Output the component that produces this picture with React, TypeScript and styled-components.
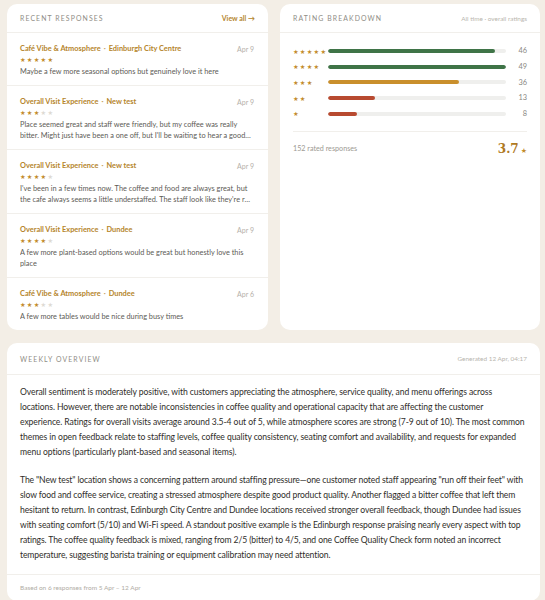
import styled, { createGlobalStyle } from "styled-components";

const GlobalStyle = createGlobalStyle`
  * { box-sizing: border-box; }
  html, body {
    margin: 0;
    padding: 0;
    background: #f3eee6;
  }
  body {
    font-family: Lato, "Noto Sans", sans-serif;
    color: #2f2e2a;
  }
`;

const Page = styled.div`
  width: 545px;
  padding: 4px 5px 3px 7px;
  display: flex;
  flex-direction: column;
  gap: 13px;
`;

const TopRow = styled.div`
  display: grid;
  grid-template-columns: 261px 260px;
  gap: 12px;
`;

const Card = styled.section`
  background: #fff;
  border-radius: 10px;
  display: flex;
  flex-direction: column;
  overflow: hidden;
`;

const CardHeader = styled.header<{ $tall?: boolean }>`
  height: ${(p) => (p.$tall ? 32 : 29)}px;
  padding: 0 13px;
  display: flex;
  align-items: center;
  justify-content: space-between;
  border-bottom: 1px solid #f1efeb;
`;

const Label = styled.h2`
  margin: 0;
  font-size: 6.9px;
  font-weight: 400;
  letter-spacing: 1.1px;
  text-transform: uppercase;
  color: #8f8d86;
`;

const HeaderLink = styled.a`
  font-size: 7px;
  font-weight: 700;
  color: #b5852c;
  text-decoration: none;
`;

const HeaderNote = styled.span`
  font-size: 6.4px;
  color: #b8b5ae;
`;

const Item = styled.article`
  padding: 10px 14px 8px 13px;
  border-bottom: 1px solid #f1efeb;
  &:last-child {
    border-bottom: none;
  }
`;

const ItemTop = styled.div`
  height: 11px;
  display: flex;
  align-items: center;
  justify-content: space-between;
`;

const ItemTitle = styled.div`
  font-size: 7.4px;
  font-weight: 700;
  color: #b5852c;
`;

const Dot = styled.span`
  margin: 0 3px;
  color: #c9a467;
`;

const DateText = styled.span`
  font-size: 7px;
  color: #b5b1aa;
`;

const StarRow = styled.div<{ $size?: number }>`
  display: flex;
  gap: 1.2px;
  height: 9px;
  align-items: center;
  margin-top: 2px;
  font-family: "DejaVu Sans", sans-serif;
  font-size: ${(p) => p.$size ?? 6.3}px;
  line-height: 1;
`;

const Star = styled.span<{ $on: boolean }>`
  color: ${(p) => (p.$on ? "#c28b2c" : "#dedad3")};
`;

const ItemText = styled.p`
  margin: 1px 0 0;
  font-size: 7.35px;
  line-height: 11px;
  color: #5d5b56;
  display: -webkit-box;
  -webkit-line-clamp: 2;
  -webkit-box-orient: vertical;
  overflow: hidden;
`;

const Breakdown = styled.div`
  padding: 10px 13px 0;
  display: flex;
  flex-direction: column;
`;

const RatingRow = styled.div`
  height: 15.7px;
  display: grid;
  grid-template-columns: 35px 1fr 21px;
  align-items: center;
`;

const Track = styled.div`
  height: 4px;
  border-radius: 2px;
  background: #efefed;
  overflow: hidden;
`;

const Fill = styled.div<{ $color: string }>`
  height: 100%;
  border-radius: 2px;
  background: ${(p) => p.$color};
`;

const Count = styled.span`
  text-align: right;
  font-size: 7.4px;
  color: #8a8882;
`;

const Divider = styled.hr`
  margin: 9.5px 13px 0;
  border: none;
  border-top: 1px solid #f1efeb;
`;

const Summary = styled.div`
  padding: 10px 13px;
  display: flex;
  align-items: center;
  justify-content: space-between;
`;

const SummaryText = styled.span`
  font-size: 7.2px;
  color: #9d9a93;
`;

const Average = styled.span`
  font-family: "DejaVu Serif", "Liberation Serif", serif;
  font-size: 12px;
  font-weight: 700;
  color: #b07a1f;
  display: flex;
  align-items: baseline;
  gap: 2px;
`;

const AverageStar = styled.span`
  font-family: "DejaVu Sans", sans-serif;
  font-size: 7px;
  color: #c28b2c;
`;

const Overview = styled.div`
  padding: 10px 13px 11px;
  display: flex;
  flex-direction: column;
  gap: 13px;
`;

const Paragraph = styled.p<{ $tracking: number }>`
  margin: 0;
  font-size: 8.6px;
  letter-spacing: ${(p) => p.$tracking}px;
  line-height: 15px;
  color: #2f2e2a;
`;

const Footer = styled.footer`
  padding: 9px 13px 10px;
  border-top: 1px solid #f1efeb;
  font-size: 6.5px;
  color: #b0aca5;
`;

interface IReview {
  survey: string;
  location: string;
  date: string;
  stars: number;
  text: string;
}

const reviews: IReview[] = [
  {
    survey: "Café Vibe & Atmosphere",
    location: "Edinburgh City Centre",
    date: "Apr 9",
    stars: 5,
    text: "Maybe a few more seasonal options but genuinely love it here",
  },
  {
    survey: "Overall Visit Experience",
    location: "New test",
    date: "Apr 9",
    stars: 3,
    text: "Place seemed great and staff were friendly, but my coffee was really bitter. Might just have been a one off, but I'll be waiting to hear a good word from friends before I come back.",
  },
  {
    survey: "Overall Visit Experience",
    location: "New test",
    date: "Apr 9",
    stars: 4,
    text: "I've been in a few times now. The coffee and food are always great, but the cafe always seems a little understaffed. The staff look like they're run off their feet most days.",
  },
  {
    survey: "Overall Visit Experience",
    location: "Dundee",
    date: "Apr 9",
    stars: 4,
    text: "A few more plant-based options would be great but honestly love this place",
  },
  {
    survey: "Café Vibe & Atmosphere",
    location: "Dundee",
    date: "Apr 6",
    stars: 3,
    text: "A few more tables would be nice during busy times",
  },
];

const ratings = [
  { stars: 5, count: 46, color: "#3f7447" },
  { stars: 4, count: 49, color: "#3f7447" },
  { stars: 3, count: 36, color: "#c98f2c" },
  { stars: 2, count: 13, color: "#b84a30" },
  { stars: 1, count: 8, color: "#b84a30" },
];

// tracking per paragraph keeps the line breaks of the original with the substitute font
const overview = [
  {
    tracking: -0.09,
    text: "Overall sentiment is moderately positive, with customers appreciating the atmosphere, service quality, and menu offerings across locations. However, there are notable inconsistencies in coffee quality and operational capacity that are affecting the customer experience. Ratings for overall visits average around 3.5-4 out of 5, while atmosphere scores are strong (7-9 out of 10). The most common themes in open feedback relate to staffing levels, coffee quality consistency, seating comfort and availability, and requests for expanded menu options (particularly plant-based and seasonal items).",
  },
  {
    tracking: -0.12,
    text: 'The "New test" location shows a concerning pattern around staffing pressure—one customer noted staff appearing "run off their feet" with slow food and coffee service, creating a stressed atmosphere despite good product quality. Another flagged a bitter coffee that left them hesitant to return. In contrast, Edinburgh City Centre and Dundee locations received stronger overall feedback, though Dundee had issues with seating comfort (5/10) and Wi-Fi speed. A standout positive example is the Edinburgh response praising nearly every aspect with top ratings. The coffee quality feedback is mixed, ranging from 2/5 (bitter) to 4/5, and one Coffee Quality Check form noted an incorrect temperature, suggesting barista training or equipment calibration may need attention.',
  },
];

const Stars = ({ value, total = 5, size }: { value: number; total?: number; size?: number }) => (
  <StarRow $size={size}>
    {Array.from({ length: total }, (_, i) => (
      <Star key={i} $on={i < value}>
        ★
      </Star>
    ))}
  </StarRow>
);

const App = () => {
  const max = Math.max(...ratings.map((r) => r.count));
  return (
    <>
      <GlobalStyle />
      <Page>
        <TopRow>
          <Card>
            <CardHeader>
              <Label>Recent responses</Label>
              <HeaderLink href="#">View all →</HeaderLink>
            </CardHeader>
            {reviews.map((r, i) => (
              <Item key={i}>
                <ItemTop>
                  <ItemTitle>
                    {r.survey}
                    <Dot>·</Dot>
                    {r.location}
                  </ItemTitle>
                  <DateText>{r.date}</DateText>
                </ItemTop>
                <Stars value={r.stars} />
                <ItemText>{r.text}</ItemText>
              </Item>
            ))}
          </Card>
          <Card>
            <CardHeader>
              <Label>Rating breakdown</Label>
              <HeaderNote>All time · overall ratings</HeaderNote>
            </CardHeader>
            <Breakdown>
              {ratings.map((r) => (
                <RatingRow key={r.stars}>
                  <Stars value={r.stars} total={r.stars} />
                  <Track>
                    <Fill $color={r.color} style={{ width: `${(r.count / max) * 100}%` }} />
                  </Track>
                  <Count>{r.count}</Count>
                </RatingRow>
              ))}
            </Breakdown>
            <Divider />
            <Summary>
              <SummaryText>152 rated responses</SummaryText>
              <Average>
                3.7<AverageStar>★</AverageStar>
              </Average>
            </Summary>
          </Card>
        </TopRow>
        <Card>
          <CardHeader $tall>
            <Label>Weekly overview</Label>
            <HeaderNote>Generated 12 Apr, 04:17</HeaderNote>
          </CardHeader>
          <Overview>
            {overview.map((p, i) => (
              <Paragraph key={i} $tracking={p.tracking}>
                {p.text}
              </Paragraph>
            ))}
          </Overview>
          <Footer>Based on 6 responses from 5 Apr – 12 Apr</Footer>
        </Card>
      </Page>
    </>
  );
};

export default App;
